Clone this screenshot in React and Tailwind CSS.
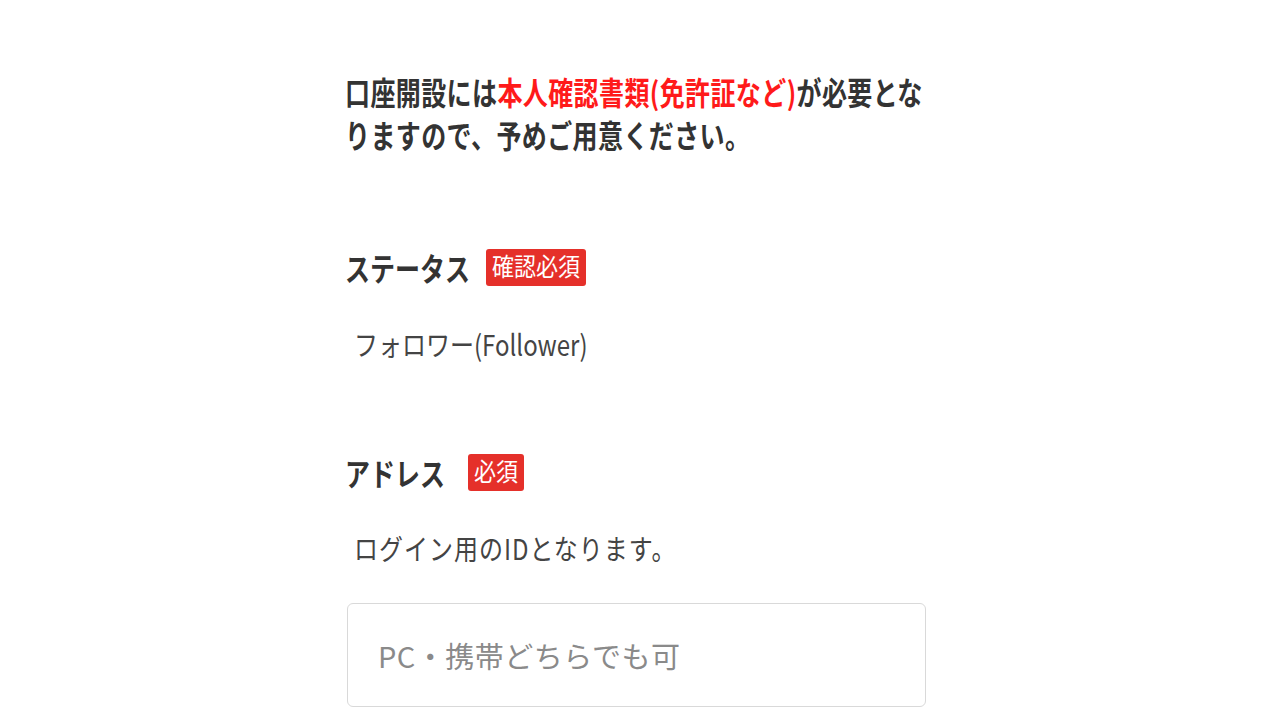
import React from 'react';

const font = { fontFamily: '"Noto Sans CJK JP", "Noto Sans", sans-serif' };

const Badge = ({ label, className = '' }) => (
  <span
    className={`inline-flex items-center h-[37px] px-[6px] rounded-[3px] bg-[#e5302a] text-white text-[22px] leading-none ${className}`}
    style={{ fontFamily: '"DejaVu Serif", "Noto Sans CJK JP", serif' }}
  >
    <span className="inline-block scale-y-[1.12]">{label}</span>
  </span>
);

const App = () => {
  return (
    <div className="min-h-screen bg-white" style={font}>
      <div className="ml-[345px] w-[580px] pt-[80px]">
        <div className="scale-y-[1.25] text-[25px] leading-[33.6px] tracking-[0.4px] font-bold text-[#333]">
          <p>
            <span>口座開設には</span>
            <span className="text-[#ff1a1a]">本人確認書類(免許証など)</span>
            <span>が必要とな</span>
          </p>
          <p>りますので、予めご用意ください。</p>
        </div>

        <div className="mt-[102px] flex items-center">
          <h2 className="inline-block scale-y-[1.25] text-[25px] font-bold text-[#333] leading-none">ステータス</h2>
          <Badge label="確認必須" className="ml-[16px]" />
        </div>
        <p className="mt-[40px] pl-[9px] scale-y-[1.2] origin-left text-[24px] leading-[36px] text-[#444]">フォロワー(Follower)</p>

        <div className="mt-[92px] flex items-center">
          <h2 className="inline-block scale-y-[1.25] text-[25px] font-bold text-[#333] leading-none">アドレス</h2>
          <Badge label="必須" className="ml-[23px]" />
        </div>
        <p className="mt-[39px] pl-[9px] scale-y-[1.2] origin-left text-[24px] leading-[36px] tracking-[1px] text-[#444]">ログイン用のIDとなります。</p>

        <input
          type="text"
          placeholder="PC・携帯どちらでも可"
          className="mt-[37px] ml-[2px] block w-[579px] h-[104px] px-[30px] border border-[#d9d9d9] rounded-[6px] text-[29px] tracking-[0.5px] text-[#333] placeholder:text-[#8a8a8a] outline-none"
        />
      </div>
    </div>
  );
};

export default App;
